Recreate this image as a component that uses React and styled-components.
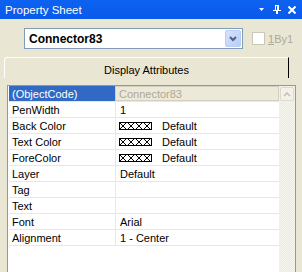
import React from "react";
import styled, { createGlobalStyle } from "styled-components";

const GlobalStyle = createGlobalStyle`
  html, body { margin: 0; padding: 0; background: #ECE9D8; }
  body { font-family: "Liberation Sans", Arial, sans-serif; font-size: 11px; color: #000; }
  * { box-sizing: border-box; }
`;

const dither = `repeating-conic-gradient(#ECE9D8 0 25%, #E6E3D1 0 50%) 0 0 / 2px 2px`;

const Window = styled.div`
  width: 302px;
  height: 272px;
  display: flex;
  flex-direction: column;
  overflow: hidden;
  background: ${dither};
`;

const TitleBar = styled.div`
  height: 19px;
  flex: none;
  display: flex;
  align-items: center;
  justify-content: space-between;
  background: linear-gradient(#0d62f2, #0a5ae8);
  color: #fff;
  padding: 0 6px 0 5px;
`;

const Title = styled.span`
  font-size: 11.5px;
  line-height: 19px;
  padding-top: 1px;
`;

const TitleButtons = styled.div`
  display: flex;
  align-items: center;
  svg { display: block; }
`;

const Toolbar = styled.div`
  flex: none;
  display: flex;
  align-items: center;
  margin-top: 9px;
  padding-left: 24px;
`;

const Combo = styled.div`
  width: 219px;
  height: 21px;
  border: 1px solid #7F9DB9;
  background: #fff;
  display: flex;
  align-items: center;
  justify-content: space-between;
  padding: 0 1px 0 4px;
`;

const ComboText = styled.span`
  font-weight: bold;
  font-size: 12px;
  padding-top: 1px;
`;

const ComboButton = styled.div`
  width: 16px;
  height: 17px;
  border-radius: 2px;
  background: linear-gradient(135deg, #d6e2fd, #b8cdf8);
  border: 1px solid #bccdf2;
  display: flex;
  align-items: center;
  justify-content: center;
`;

const CheckLabel = styled.label`
  display: flex;
  align-items: center;
  margin-left: 9px;
  color: #ACA899;
`;

const CheckBox = styled.span`
  width: 13px;
  height: 13px;
  border: 1px solid #C9C7BA;
  background: #fff;
  margin-right: 3px;
`;

const CheckText = styled.span`
  font-size: 11px;
  u { text-decoration: underline; }
`;

const Tab = styled.div`
  flex: none;
  margin: 8px 0 0 4px;
  width: 285px;
  height: 21px;
  border-top: 1px solid #fff;
  border-left: 1px solid #fff;
  border-right: 1px solid #000;
  border-top-left-radius: 3px;
  display: flex;
  align-items: center;
  justify-content: center;
  font-size: 11px;
  padding-top: 3px;
`;

const Grid = styled.div`
  flex: 1;
  margin: 7px 0 0 7px;
  width: 289px;
  border: 1px solid #7F9DB9;
  border-bottom: none;
  display: flex;
`;

const Rows = styled.div`
  width: 271px;
  background: #fff;
  padding-left: 1px;
`;

const Row = styled.div`
  height: 16px;
  display: flex;
  border-bottom: 1px solid #EAE8DB;
`;

const Label = styled.div`
  width: 106px;
  flex: none;
  padding: 1px 0 0 3px;
  line-height: 14px;
  white-space: nowrap;
  background: ${(p) => (p.$selected ? "#316AC5" : "transparent")};
  color: ${(p) => (p.$selected ? "#fff" : "#000")};
`;

const Value = styled.div`
  flex: 1;
  min-width: 0;
  border-left: 1px solid #EAE8DB;
  display: flex;
  align-items: center;
  padding: 1px 0 0 4px;
  line-height: 14px;
  white-space: nowrap;
  ${(p) =>
    p.$disabled &&
    `
    background: #ECE9D8;
    border: 1px solid #D4D0C0;
    padding-left: 3px;
    padding-top: 0;
    color: #ACA899;
  `}
`;

const Swatch = styled.svg`
  display: block;
  margin: 0 10px 0 -1px;
  flex: none;
`;

const ScrollBar = styled.div`
  width: 16px;
  background: repeating-conic-gradient(#F4F3EC 0 25%, #EEECE2 0 50%) 0 0 / 2px 2px;
  padding: 1px 1px 0 1px;
`;

const ScrollButton = styled.div`
  width: 14px;
  height: 14px;
  border: 1px solid #DEDBCB;
  border-radius: 2px;
  background: #F3F1E9;
  display: flex;
  align-items: center;
  justify-content: center;
`;

const ColorSwatch = () => (
  <Swatch width="33" height="8" viewBox="0 0 33 8" shapeRendering="crispEdges">
    <rect x="0.5" y="0.5" width="32" height="7" fill="#fff" stroke="#000" />
    <path
      d="M0 0 L8 8 M8 0 L0 8 M8 0 L16 8 M16 0 L8 8 M16 0 L24 8 M24 0 L16 8 M24 0 L32 8 M32 0 L24 8"
      stroke="#000"
      strokeWidth="1"
      fill="none"
      shapeRendering="auto"
    />
  </Swatch>
);

const rows = [
  { label: "(ObjectCode)", value: "Connector83", selected: true, disabled: true },
  { label: "PenWidth", value: "1" },
  { label: "Back Color", value: "Default", swatch: true },
  { label: "Text Color", value: "Default", swatch: true },
  { label: "ForeColor", value: "Default", swatch: true },
  { label: "Layer", value: "Default" },
  { label: "Tag", value: "" },
  { label: "Text", value: "" },
  { label: "Font", value: "Arial" },
  { label: "Alignment", value: "1 - Center" },
];

export default function App() {
  return (
    <>
      <GlobalStyle />
      <Window>
        <TitleBar>
          <Title>Property Sheet</Title>
          <TitleButtons>
            <svg width="6" height="4" viewBox="0 0 6 4" style={{ marginRight: 8 }}>
              <path d="M0 0 H5 L2.5 3 Z" fill="#fff" />
            </svg>
            <svg width="8" height="9" viewBox="0 0 8 9" shapeRendering="crispEdges" style={{ marginRight: 7 }}>
              <rect x="2" y="0" width="1" height="5" fill="#fff" />
              <rect x="4" y="0" width="2" height="5" fill="#fff" />
              <rect x="2" y="0" width="4" height="1" fill="#fff" />
              <rect x="0" y="5" width="8" height="1" fill="#fff" />
              <rect x="3" y="6" width="2" height="3" fill="#fff" />
            </svg>
            <svg width="8" height="8" viewBox="0 0 8 8">
              <path d="M0.5 0.5 L7.5 7.5 M7.5 0.5 L0.5 7.5" stroke="#fff" strokeWidth="2" />
            </svg>
          </TitleButtons>
        </TitleBar>

        <Toolbar>
          <Combo>
            <ComboText>Connector83</ComboText>
            <ComboButton>
              <svg width="8" height="6" viewBox="0 0 8 6">
                <path d="M1 1 L4 4 L7 1" fill="none" stroke="#4D6185" strokeWidth="2" />
              </svg>
            </ComboButton>
          </Combo>
          <CheckLabel>
            <CheckBox />
            <CheckText>
              <u>1</u>By1
            </CheckText>
          </CheckLabel>
        </Toolbar>

        <Tab>Display Attributes</Tab>

        <Grid>
          <Rows>
            {rows.map((r) => (
              <Row key={r.label}>
                <Label $selected={r.selected}>{r.label}</Label>
                <Value $disabled={r.disabled}>
                  {r.swatch && <ColorSwatch />}
                  {r.value}
                </Value>
              </Row>
            ))}
          </Rows>
          <ScrollBar>
            <ScrollButton>
              <svg width="8" height="5" viewBox="0 0 8 5">
                <path d="M1 4 L4 1 L7 4" fill="none" stroke="#C3C0B2" strokeWidth="1.5" />
              </svg>
            </ScrollButton>
          </ScrollBar>
        </Grid>
      </Window>
    </>
  );
}
